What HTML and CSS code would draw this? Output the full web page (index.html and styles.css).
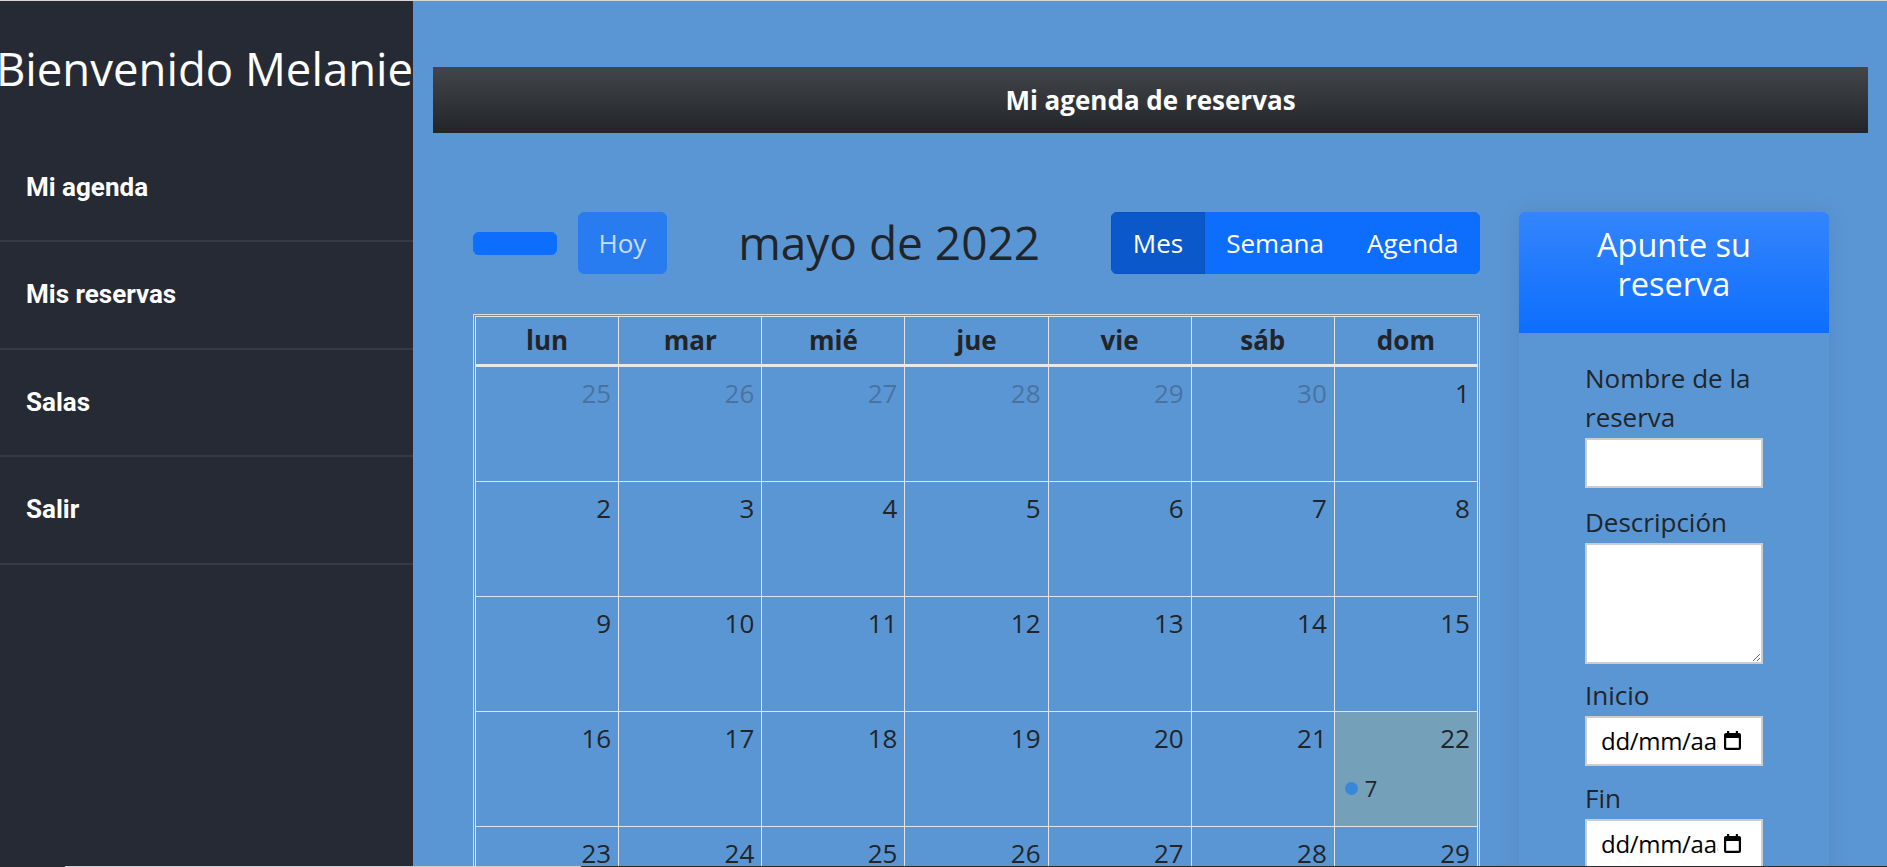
FILE: index.html
```html
<!DOCTYPE html>
<html lang="es">
<head>
<meta charset="utf-8">
<title>Mi agenda de reservas</title>
<link rel="stylesheet" href="styles.css">
</head>
<body>
<div class="app">
  <aside class="sidebar">
    <div class="brand"><span>Bienvenido Melanie</span></div>
    <nav class="nav">
      <a class="nav-item" href="#">Mi agenda</a>
      <a class="nav-item" href="#">Mis reservas</a>
      <a class="nav-item" href="#">Salas</a>
      <a class="nav-item" href="#">Salir</a>
    </nav>
  </aside>
  <main class="main">
    <div class="topbar">Mi agenda de reservas</div>
    <div class="content">
      <section class="calendar">
        <div class="toolbar">
          <div class="tb-chunk">
            <div class="btn-group">
              <button class="btn btn-empty"></button><button class="btn btn-empty"></button>
            </div>
            <button class="btn btn-today">Hoy</button>
          </div>
          <h2 class="cal-title">mayo de 2022</h2>
          <div class="btn-group">
            <button class="btn btn-view btn-active">Mes</button><button class="btn btn-view">Semana</button><button class="btn btn-view">Agenda</button>
          </div>
        </div>
        <div class="grid">
          <div class="grid-head">
            <div class="hcell">lun</div><div class="hcell">mar</div><div class="hcell">mié</div><div class="hcell">jue</div><div class="hcell">vie</div><div class="hcell">sáb</div><div class="hcell">dom</div>
          </div>
          <div class="grid-body">
            <div class="cell other"><span class="num">25</span></div>
            <div class="cell other"><span class="num">26</span></div>
            <div class="cell other"><span class="num">27</span></div>
            <div class="cell other"><span class="num">28</span></div>
            <div class="cell other"><span class="num">29</span></div>
            <div class="cell other"><span class="num">30</span></div>
            <div class="cell"><span class="num">1</span></div>

            <div class="cell"><span class="num">2</span></div>
            <div class="cell"><span class="num">3</span></div>
            <div class="cell"><span class="num">4</span></div>
            <div class="cell"><span class="num">5</span></div>
            <div class="cell"><span class="num">6</span></div>
            <div class="cell"><span class="num">7</span></div>
            <div class="cell"><span class="num">8</span></div>

            <div class="cell"><span class="num">9</span></div>
            <div class="cell"><span class="num">10</span></div>
            <div class="cell"><span class="num">11</span></div>
            <div class="cell"><span class="num">12</span></div>
            <div class="cell"><span class="num">13</span></div>
            <div class="cell"><span class="num">14</span></div>
            <div class="cell"><span class="num">15</span></div>

            <div class="cell"><span class="num">16</span></div>
            <div class="cell"><span class="num">17</span></div>
            <div class="cell"><span class="num">18</span></div>
            <div class="cell"><span class="num">19</span></div>
            <div class="cell"><span class="num">20</span></div>
            <div class="cell"><span class="num">21</span></div>
            <div class="cell today"><span class="num">22</span>
              <div class="event"><span class="dot"></span><span class="ev-title">7</span></div>
            </div>

            <div class="cell"><span class="num">23</span></div>
            <div class="cell"><span class="num">24</span></div>
            <div class="cell"><span class="num">25</span></div>
            <div class="cell"><span class="num">26</span></div>
            <div class="cell"><span class="num">27</span></div>
            <div class="cell"><span class="num">28</span></div>
            <div class="cell"><span class="num">29</span></div>

            <div class="cell"><span class="num">30</span></div>
            <div class="cell"><span class="num">31</span></div>
            <div class="cell other"><span class="num">1</span></div>
            <div class="cell other"><span class="num">2</span></div>
            <div class="cell other"><span class="num">3</span></div>
            <div class="cell other"><span class="num">4</span></div>
            <div class="cell other"><span class="num">5</span></div>
          </div>
        </div>
      </section>
      <aside class="card">
        <div class="card-header"><h5 class="card-title">Apunte su reserva</h5></div>
        <div class="card-body">
          <form class="form">
            <label class="label">Nombre de la reserva</label>
            <input class="control first" type="text">
            <label class="label">Descripción</label>
            <textarea class="control area"></textarea>
            <label class="label">Inicio</label>
            <div class="control date"><span class="date-text">dd/mm/aaaa</span><svg class="cal-icon" width="19" height="19" viewBox="0 0 19 19"><rect x="4" y="0" width="2.2" height="3.5" fill="#000"/><rect x="12.8" y="0" width="2.2" height="3.5" fill="#000"/><path fill="#000" fill-rule="evenodd" d="M3 2h13a2 2 0 0 1 2 2v13a2 2 0 0 1-2 2H3a2 2 0 0 1-2-2V4a2 2 0 0 1 2-2zM3.2 7v9.8h12.6V7z"/></svg></div>
            <label class="label">Fin</label>
            <div class="control date"><span class="date-text">dd/mm/aaaa</span><svg class="cal-icon" width="19" height="19" viewBox="0 0 19 19"><rect x="4" y="0" width="2.2" height="3.5" fill="#000"/><rect x="12.8" y="0" width="2.2" height="3.5" fill="#000"/><path fill="#000" fill-rule="evenodd" d="M3 2h13a2 2 0 0 1 2 2v13a2 2 0 0 1-2 2H3a2 2 0 0 1-2-2V4a2 2 0 0 1 2-2zM3.2 7v9.8h12.6V7z"/></svg></div>
          </form>
        </div>
      </aside>
    </div>
  </main>
</div>
<div class="hscroll"><span class="thumb"></span></div>
</body>
</html>
```

FILE: styles.css
```css
* { box-sizing: border-box; }

html, body {
  margin: 0;
  height: 100%;
  overflow: hidden;
}

body {
  font-family: "Open Sans", "Liberation Sans", sans-serif;
  font-size: 26px;
  line-height: 1.5;
  color: #212529;
  background: #5b96d4;
}

.app {
  display: flex;
  height: 100vh;
  border-top: 1px solid #d6d6d6;
}

/* Sidebar */
.sidebar {
  width: 413px;
  flex: 0 0 413px;
  background: #262a35;
  padding-top: 40px;
}

.brand {
  display: flex;
  justify-content: center;
  padding-right: 4px;
  white-space: nowrap;
  font-family: "Open Sans", sans-serif;
  font-size: 45.5px;
  line-height: 54.6px;
  color: #fff;
  margin-bottom: 39px;
}

.nav {
  display: flex;
  flex-direction: column;
}

.nav-item {
  display: block;
  padding: 33px 25px 33.5px 26px;
  border-bottom: 2px solid #363a45;
  font-family: Roboto, "Liberation Sans", sans-serif;
  font-weight: 700;
  font-size: 26px;
  line-height: 39px;
  color: #fff;
  text-decoration: none;
}

/* Main */
.main {
  flex: 1 1 auto;
  background: #5b96d4;
  padding-top: 66px;
  min-width: 0;
}

.topbar {
  margin: 0 19px 0 20px;
  height: 66px;
  background: linear-gradient(180deg, #42464a, #212529);
  color: #fff;
  font-weight: 700;
  font-size: 26px;
  line-height: 66px;
  text-align: center;
}

.content {
  display: flex;
  align-items: flex-start;
  gap: 39px;
  padding: 79px 58px 0 60px;
}

.calendar {
  width: 1007px;
  flex: 0 0 1007px;
}

.toolbar {
  display: flex;
  justify-content: space-between;
  align-items: center;
  height: 62px;
  margin-bottom: 40px;
}

.tb-chunk {
  display: flex;
  align-items: center;
}

.cal-title {
  margin: 0;
  font-weight: 400;
  font-size: 46px;
  line-height: 1.2;
  color: #212529;
}

.btn-group {
  display: inline-flex;
  border-radius: 6px;
  overflow: hidden;
}

.btn {
  font-family: "Open Sans", sans-serif;
  font-size: 26px;
  line-height: 39px;
  padding: 10.5px 19.5px;
  border: 1px solid #0d6efd;
  background: #0d6efd;
  color: #fff;
  margin: 0;
}

.btn-view {
  padding-left: 20.5px;
  padding-right: 20.5px;
}

.btn-empty {
  width: 42px;
}

.btn-active {
  background: #0a58ca;
  border-color: #0a53be;
}

.btn-today {
  margin-left: 21px;
  border-radius: 6px;
  background: #287cef;
  border-color: #287cef;
  color: #c9dcf8;
}

/* Grid */
.grid {
  border: 1px solid #dcdcdc;
  padding: 1px;
}

.grid-head,
.grid-body {
  display: grid;
  grid-template-columns: repeat(7, 1fr);
  border-left: 1px solid #e4e4e4;
}

.grid-head {
  border-top: 1px solid #e4e4e4;
  border-bottom: 3px solid #e8e8e8;
}

.hcell {
  border-right: 1px solid #e4e4e4;
  padding: 4px;
  text-align: center;
  font-weight: 700;
  line-height: 39px;
}

.grid-body {
  height: 500px;
  overflow: hidden;
  grid-auto-rows: 115px;
}

.cell {
  border-right: 1px solid #e4e4e4;
  border-bottom: 1px solid #e4e4e4;
  padding: 6.5px 7px 0 0;
  text-align: right;
  line-height: 39px;
}

.cell .num {
  display: block;
}

.cell.other .num {
  opacity: 0.3;
}

.cell.today {
  background: #74a0b9;
}

.event {
  display: flex;
  align-items: center;
  margin-top: 11px;
  padding: 3px 0 3px 10px;
  font-size: 22px;
  line-height: 33px;
  text-align: left;
}

.dot {
  width: 13px;
  height: 13px;
  border-radius: 50%;
  background: #3788d8;
  margin-right: 7px;
}

/* Card */
.card {
  width: 310px;
  flex: 0 0 310px;
  height: 700px;
  border-radius: 6px 6px 0 0;
  background: #5b96d4;
  box-shadow: 0 0 24px rgba(0, 0, 0, 0.09);
}

.card-header {
  border-radius: 6px 6px 0 0;
  background: linear-gradient(180deg, #3485fc, #0d6efd);
  padding: 13px 26px 30px;
  text-align: center;
}

.card-title {
  margin: 0;
  font-weight: 400;
  font-size: 32.5px;
  line-height: 39px;
  color: #fff;
}

.card-body {
  padding-top: 26px;
}

.form {
  width: 178px;
  margin: 0 auto;
}

.label {
  display: block;
  line-height: 39px;
  margin-bottom: 1px;
}

.control {
  display: block;
  width: 178px;
  height: 50px;
  margin: 0 0 13px;
  border: 2px solid #cdcdcd;
  background: #fff;
  font-family: "Open Sans", sans-serif;
  font-size: 26px;
}

.control.first {
  margin-bottom: 14.5px;
}

.area {
  height: 121px;
  margin-bottom: 12px;
  resize: both;
}

.date {
  display: flex;
  align-items: center;
  padding: 0 19px 0 14px;
  color: #000;
  font-size: 24px;
  letter-spacing: -0.3px;
  line-height: 39px;
}

.date-text {
  width: 117px;
  overflow: hidden;
  white-space: nowrap;
}

.cal-icon {
  margin-left: 5px;
  flex: 0 0 19px;
}

.hscroll {
  position: fixed;
  left: 0;
  right: 0;
  bottom: 0;
  height: 1px;
  background: #2a2a2a;
}

.hscroll .thumb {
  position: absolute;
  left: 65px;
  width: 516px;
  top: 0;
  height: 1px;
  background: #cfcfcf;
}
```
